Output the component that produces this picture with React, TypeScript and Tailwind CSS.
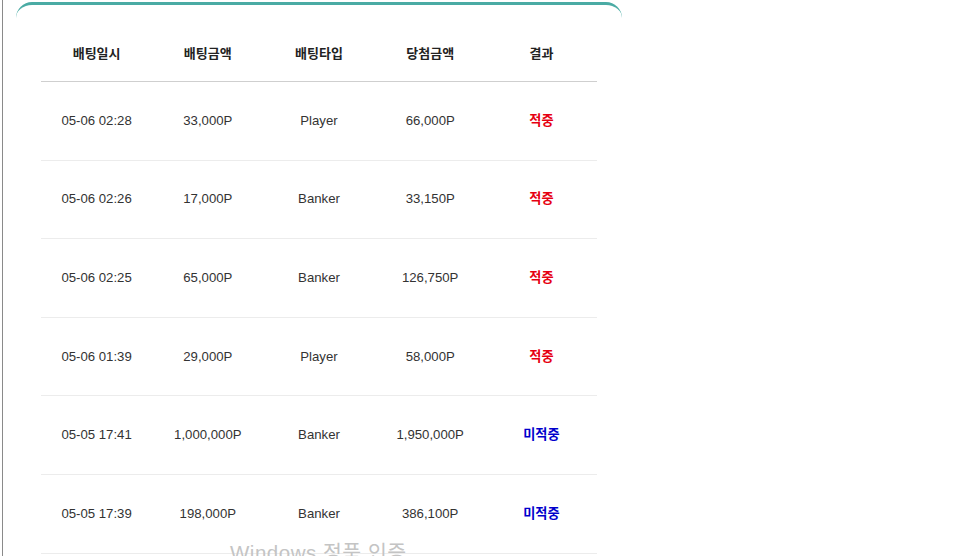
const ROWS = [
  { date: '05-06 02:28', bet: '33,000P', type: 'Player', win: '66,000P', hit: true },
  { date: '05-06 02:26', bet: '17,000P', type: 'Banker', win: '33,150P', hit: true },
  { date: '05-06 02:25', bet: '65,000P', type: 'Banker', win: '126,750P', hit: true },
  { date: '05-06 01:39', bet: '29,000P', type: 'Player', win: '58,000P', hit: true },
  { date: '05-05 17:41', bet: '1,000,000P', type: 'Banker', win: '1,950,000P', hit: false },
  { date: '05-05 17:39', bet: '198,000P', type: 'Banker', win: '386,100P', hit: false },
]

const HEADERS = ['배팅일시', '배팅금액', '배팅타입', '당첨금액', '결과']

const App = () => {
  const rows = ROWS.map((row, idx) => (
    <div
      key={`${row.date}-${idx}`}
      className="grid grid-cols-5 items-center h-[78.6px] border-b border-[#ececec] text-[13.2px] text-[#333] text-center"
    >
      <div>{row.date}</div>
      <div>{row.bet}</div>
      <div>{row.type}</div>
      <div>{row.win}</div>
      <div className={row.hit ? 'font-bold text-[#e60012]' : 'font-bold text-[#0000cc]'}>
        {row.hit ? '적중' : '미적중'}
      </div>
    </div>
  ))

  return (
    <div
      className="relative flex h-[556px] w-full overflow-hidden bg-white"
      style={{ fontFamily: '"Liberation Sans", Arial, "Noto Sans CJK KR", sans-serif' }}
    >
      <div className="ml-[2px] w-px bg-[#8a8a8a]" />
      <div className="ml-[13px] mt-[2px] w-[606px] shrink-0 self-start rounded-2xl border-t-[3px] border-[#4aaba4] bg-white px-[25px] pt-[22px]">
        <div className="grid grid-cols-5 items-center h-[55px] border-b border-[#cfcfcf] text-[13px] font-bold text-[#222] text-center">
          {HEADERS.map((h) => (
            <div key={h}>{h}</div>
          ))}
        </div>
        {rows}
      </div>
      <div className="absolute left-[230px] top-[538px] text-[20.5px] text-[#c4c4c4] tracking-wide pointer-events-none">
        Windows 정품 인증
      </div>
    </div>
  )
}

export default App
